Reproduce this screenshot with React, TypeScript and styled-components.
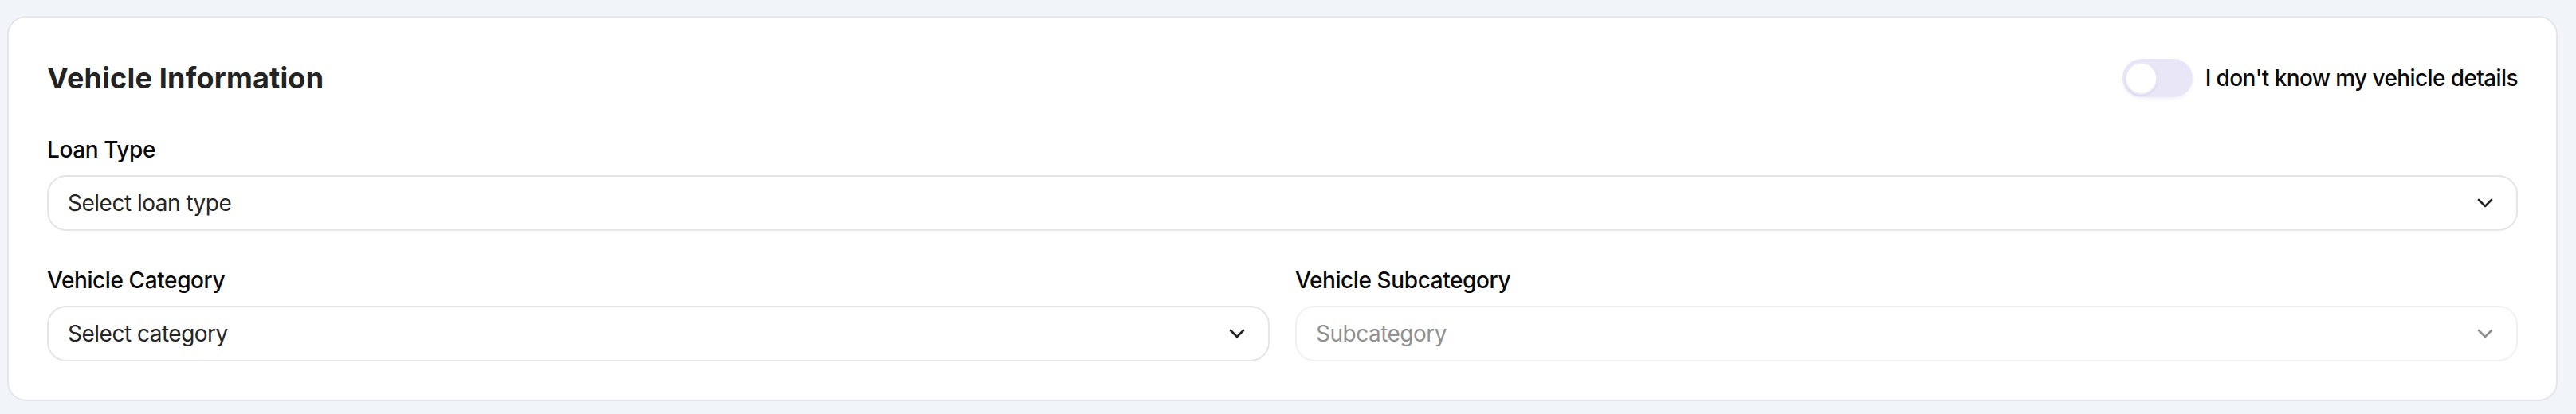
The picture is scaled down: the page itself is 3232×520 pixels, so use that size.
import { createGlobalStyle, styled } from 'styled-components';
import { ChevronDown } from 'lucide-react';


const GlobalStyle = createGlobalStyle`
  html, body {
    margin: 0;
    background-color: #f1f4f9;
  }
  body {
    font-family: Inter, "Noto Sans", "Liberation Sans", sans-serif;
    -webkit-font-smoothing: antialiased;
  }
`;

const loanFields = [{ label: 'Loan Type', placeholder: 'Select loan type' }];

const categoryFields = [
  { label: 'Vehicle Category', placeholder: 'Select category', disabled: false },
  { label: 'Vehicle Subcategory', placeholder: 'Subcategory', disabled: true },
];

export default function App() {
  return (
    <Page>
      <GlobalStyle />
      <Card>
        <Header>
          <Title>Vehicle Information</Title>
          <ToggleLabel>
            <Track>
              <Knob />
            </Track>
            I don't know my vehicle details
          </ToggleLabel>
        </Header>

        {loanFields.map((field) => {
          return (
            <Field key={field.label}>
              <Label>{field.label}</Label>
              <Trigger type="button">
                <span>{field.placeholder}</span>
                <ChevronDown size={32} strokeWidth={2} />
              </Trigger>
            </Field>
          );
        })}

        <Row>
          {
            categoryFields.map((field) => {
              return (
                <Field key={field.label}>
                  <Label>{field.label}</Label>
                  <Trigger type="button" disabled={field.disabled} $disabled={field.disabled}>
                    <span>{field.placeholder}</span>
                    <ChevronDown size={32} strokeWidth={2} />
                  </Trigger>
                </Field>
              );
            })
          }
        </Row>
      </Card>
    </Page>
  );
}

const Page = styled.div`
  padding: 20px 23px 18px 9px;
`;

const Card = styled.section`
  background-color: #ffffff;
  border: 2px solid #e4e6ea;
  border-radius: 24px;
  padding: 48px;
`;

const Header = styled.div`
  display: flex;
  align-items: center;
  justify-content: space-between;
  margin-bottom: 42px;
`;

const Title = styled.h2`
  margin: 0;
  font-size: 36px;
  line-height: 56px;
  font-weight: 700;
  letter-spacing: 0.2px;
  color: #232323;
`;

const ToggleLabel = styled.label`
  display: flex;
  align-items: center;
  gap: 16px;
  font-size: 28px;
  line-height: 40px;
  font-weight: 500;
  letter-spacing: -0.6px;
  color: #0a0a0a;
  cursor: pointer;
`;

const Track = styled.span`
  display: flex;
  align-items: center;
  box-sizing: border-box;
  width: 88px;
  height: 48px;
  padding: 0 3px;
  border-radius: 24px;
  background-color: #e9e7f7;
  box-shadow: 0 2px 4px rgba(90, 80, 160, 0.08);
`;

const Knob = styled.span`
  box-sizing: border-box;
  width: 41px;
  height: 41px;
  border-radius: 50%;
  background-color: #ffffff;
  border: 2px solid #ebe9f8;
  box-shadow: 0 1px 3px rgba(60, 50, 120, 0.12);
`;

const Field = styled.div`
  display: flex;
  flex-direction: column;
`;

const Label = styled.div`
  font-size: 28px;
  line-height: 40px;
  font-weight: 500;
  letter-spacing: -0.4px;
  color: #0a0a0a;
  margin-bottom: 12px;
`;

const Row = styled.div`
  display: grid;
  grid-template-columns: 1fr 1fr;
  gap: 32px;
  margin-top: 42px;
`;

const Trigger = styled.button<{ $disabled?: boolean }>`
  display: flex;
  align-items: center;
  justify-content: space-between;
  box-sizing: border-box;
  width: 100%;
  height: 70px;
  padding: 0 23px 0 24px;
  border: 2px solid #e5e5e5;
  border-radius: 24px;
  background-color: #ffffff;
  font-family: inherit;
  font-size: 28px;
  font-weight: 400;
  letter-spacing: -0.5px;
  color: #262626;
  text-align: left;
  opacity: ${(props) => (props.$disabled ? 0.5 : 1)};
  cursor: ${(props) => (props.$disabled ? 'not-allowed' : 'pointer')};

  svg {
    color: #222222;
    flex-shrink: 0;
  }
`;
